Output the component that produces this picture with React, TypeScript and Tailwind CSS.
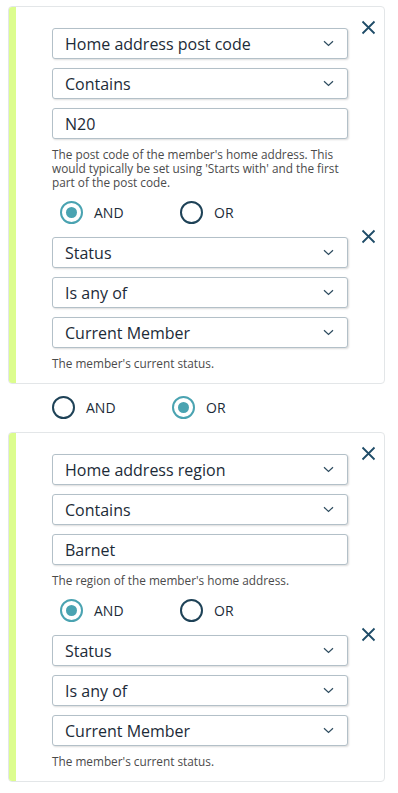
import { useState } from 'react';

type Condition = {
  field: string;
  op: string;
  value: string;
  isSelect: boolean;
  help: string;
};

type Group = {
  conditions: Condition[];
  joins: ('AND' | 'OR')[];
};

const groups: Group[] = [
  {
    conditions: [
      {
        field: 'Home address post code',
        op: 'Contains',
        value: 'N20',
        isSelect: false,
        help: "The post code of the member's home address. This would typically be set using 'Starts with' and the first part of the post code.",
      },
      {
        field: 'Status',
        op: 'Is any of',
        value: 'Current Member',
        isSelect: true,
        help: "The member's current status.",
      },
    ],
    joins: ['AND'],
  },
  {
    conditions: [
      {
        field: 'Home address region',
        op: 'Contains',
        value: 'Barnet',
        isSelect: false,
        help: "The region of the member's home address.",
      },
      {
        field: 'Status',
        op: 'Is any of',
        value: 'Current Member',
        isSelect: true,
        help: "The member's current status.",
      },
    ],
    joins: ['AND'],
  },
];

function Chevron() {
  return (
    <svg width="11" height="7" viewBox="0 0 11 7" fill="none" className="shrink-0">
      <path d="M1 1.2 L5.5 5.5 L10 1.2" stroke="#2f4d60" strokeWidth="1.2" />
    </svg>
  );
}

function CloseIcon() {
  return (
    <svg width="15" height="15" viewBox="0 0 15 15" fill="none">
      <path d="M1.5 1.5 L13.5 13.5 M13.5 1.5 L1.5 13.5" stroke="#1f4c68" strokeWidth="1.8" />
    </svg>
  );
}

function Field({ text, select }: { text: string; select: boolean }) {
  return (
    <div className="h-[31px] flex items-center justify-between pl-[12px] pr-[13px] border border-[#b3c0c8] rounded-[3px] bg-white shadow-[1px_1px_2px_rgba(0,0,0,0.14)]">
      <span className="text-[16px] text-[#1c2b38] leading-none">{text}</span>
      {select && <Chevron />}
    </div>
  );
}

function Radio({ checked, label }: { checked: boolean; label: string }) {
  return (
    <div className="flex items-center gap-[11px]">
      <div
        className={
          checked
            ? 'w-[23px] h-[23px] rounded-full border-[2.5px] border-[#4aa3b1] flex items-center justify-center'
            : 'w-[23px] h-[23px] rounded-full border-[2.5px] border-[#1e4257]'
        }
      >
        {checked && <div className="w-[11px] h-[11px] rounded-full bg-[#4aa3b1]" />}
      </div>
      <span className="text-[14px] text-[#1c2b38]">{label}</span>
    </div>
  );
}

function Join({ value, onChange }: { value: 'AND' | 'OR'; onChange: (v: 'AND' | 'OR') => void }) {
  return (
    <div className="flex items-center">
      <button className="w-[120px] cursor-pointer" onClick={() => onChange('AND')}>
        <Radio checked={value === 'AND'} label="AND" />
      </button>
      <button className="cursor-pointer" onClick={() => onChange('OR')}>
        <Radio checked={value === 'OR'} label="OR" />
      </button>
    </div>
  );
}

function ConditionRow({ c }: { c: Condition }) {
  return (
    <div className="flex">
      <div className="flex-1 flex flex-col gap-[9px]">
        <Field text={c.field} select />
        <Field text={c.op} select />
        <Field text={c.value} select={c.isSelect} />
        <p className="mt-[-1px] text-[11.8px] leading-[14px] text-[#4b4b4b]">{c.help}</p>
      </div>
      <div className="w-[36px] flex justify-end pr-[8px]">
        <button className="h-[15px] mt-[-8px] cursor-pointer">
          <CloseIcon />
        </button>
      </div>
    </div>
  );
}

function GroupCard({ group }: { group: Group }) {
  const [joins, setJoins] = useState(group.joins);
  return (
    <div className="flex border border-[#e3e6e8] rounded-[4px] overflow-hidden bg-white">
      <div className="w-[7px] bg-[#dcfd8e] shrink-0" />
      <div className="flex-1 pl-[36px] pt-[21px] pb-[13px]">
        {group.conditions.map((c, i) => (
          <div key={i}>
            {i > 0 && (
              <div className="pl-[8px] mt-[12px] mb-[13px]">
                <Join
                  value={joins[i - 1]}
                  onChange={(v) => setJoins(joins.map((j, k) => (k === i - 1 ? v : j)))}
                />
              </div>
            )}
            <ConditionRow c={c} />
          </div>
        ))}
      </div>
    </div>
  );
}

export default function App() {
  const [outer, setOuter] = useState<'AND' | 'OR'>('OR');
  return (
    <div className="min-h-screen bg-white pt-[6px] pl-[8px] pr-[13px] font-['Open_Sans',sans-serif]">
      <GroupCard group={groups[0]} />
      <div className="pl-[44px] mt-[12px] mb-[13px]">
        <Join value={outer} onChange={setOuter} />
      </div>
      <GroupCard group={groups[1]} />
    </div>
  );
}
